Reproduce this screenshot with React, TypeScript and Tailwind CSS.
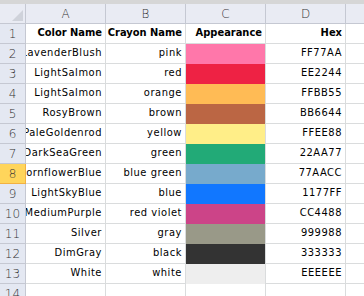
import React from "react";

const rows = [
  ["LavenderBlush", "pink", "#ff77aa", "FF77AA"],
  ["LightSalmon", "red", "#ee2244", "EE2244"],
  ["LightSalmon", "orange", "#ffbb55", "FFBB55"],
  ["RosyBrown", "brown", "#bb6644", "BB6644"],
  ["PaleGoldenrod", "yellow", "#ffee88", "FFEE88"],
  ["DarkSeaGreen", "green", "#22aa77", "22AA77"],
  ["CornflowerBlue", "blue green", "#77aacc", "77AACC"],
  ["LightSkyBlue", "blue", "#1177ff", "1177FF"],
  ["MediumPurple", "red violet", "#cc4488", "CC4488"],
  ["Silver", "gray", "#999988", "999988"],
  ["DimGray", "black", "#333333", "333333"],
  ["White", "white", "#eeeeee", "EEEEEE"],
];

const font = { fontFamily: "'DejaVu Sans Condensed', 'DejaVu Sans', sans-serif", fontStretch: "condensed" as const };

function TextCell({ children, bold }: { children?: React.ReactNode; bold?: boolean }) {
  return (
    <div
      className={`h-[20px] border-r border-b border-[#dadcdd] bg-white flex items-center justify-end pr-[3px] overflow-hidden whitespace-nowrap text-[11px] text-black ${bold ? "font-bold" : "tracking-[0.55px]"}`}
    >
      <span>{children}</span>
    </div>
  );
}

function RowHead({ n, selected }: { n: number; selected?: boolean }) {
  return (
    <div
      className={`h-[20px] border-r border-b flex items-center justify-center text-[12px] ${
        selected ? "bg-[#ffd55b] border-[#f2b142] text-[#333]" : "bg-[#e4e8f2] border-[#c5c8d2] text-[#333]"
      }`}
      style={{ fontFamily: "'DejaVu Sans', sans-serif", fontWeight: 300 }}
    >
      {n}
    </div>
  );
}

function ColHead({ l }: { l: string }) {
  return (
    <div
      className="h-[20px] border-r border-b border-[#c5c8d2] bg-[#e9ebf3] flex items-center justify-center text-[12px] text-[#333]"
      style={{ fontFamily: "'DejaVu Sans', sans-serif", fontWeight: 300 }}
    >
      {l}
    </div>
  );
}

export default function App() {
  return (
    <div className="w-[364px] h-[296px] overflow-hidden bg-white" style={font}>
      <div className="h-[4px] bg-[#d6d6d6]" />
      <div className="grid grid-cols-[26px_80px_80px_80px_80px_18px]">
        <div className="h-[20px] border-r border-b border-[#c5c8d2] bg-[#e9ebf3] relative">
          <svg className="absolute right-[2px] bottom-[2px]" width="11" height="11" viewBox="0 0 11 11">
            <polygon points="11,0 11,11 0,11" fill="#cfd2da" />
          </svg>
        </div>
        <ColHead l="A" />
        <ColHead l="B" />
        <ColHead l="C" />
        <ColHead l="D" />
        <div className="h-[20px] border-b border-[#c5c8d2] bg-[#e9ebf3]" />

        <RowHead n={1} />
        <TextCell bold>Color Name</TextCell>
        <TextCell bold>Crayon Name</TextCell>
        <TextCell bold>Appearance</TextCell>
        <TextCell bold>Hex</TextCell>
        <div className="h-[20px] border-b border-[#dadcdd]" />

        {rows.map((r, i) => (
          <React.Fragment key={i}>
            <RowHead n={i + 2} selected={i === 6} />
            <TextCell>{r[0]}</TextCell>
            <TextCell>{r[1]}</TextCell>
            <div className="h-[20px] border-r border-[#dadcdd]" style={{ backgroundColor: r[2] }} />
            <TextCell>{r[3]}</TextCell>
            <div className="h-[20px] border-b border-[#dadcdd]" />
          </React.Fragment>
        ))}

        <RowHead n={14} />
        <TextCell />
        <TextCell />
        <TextCell />
        <TextCell />
        <div className="h-[20px] border-b border-[#dadcdd]" />
      </div>
    </div>
  );
}
